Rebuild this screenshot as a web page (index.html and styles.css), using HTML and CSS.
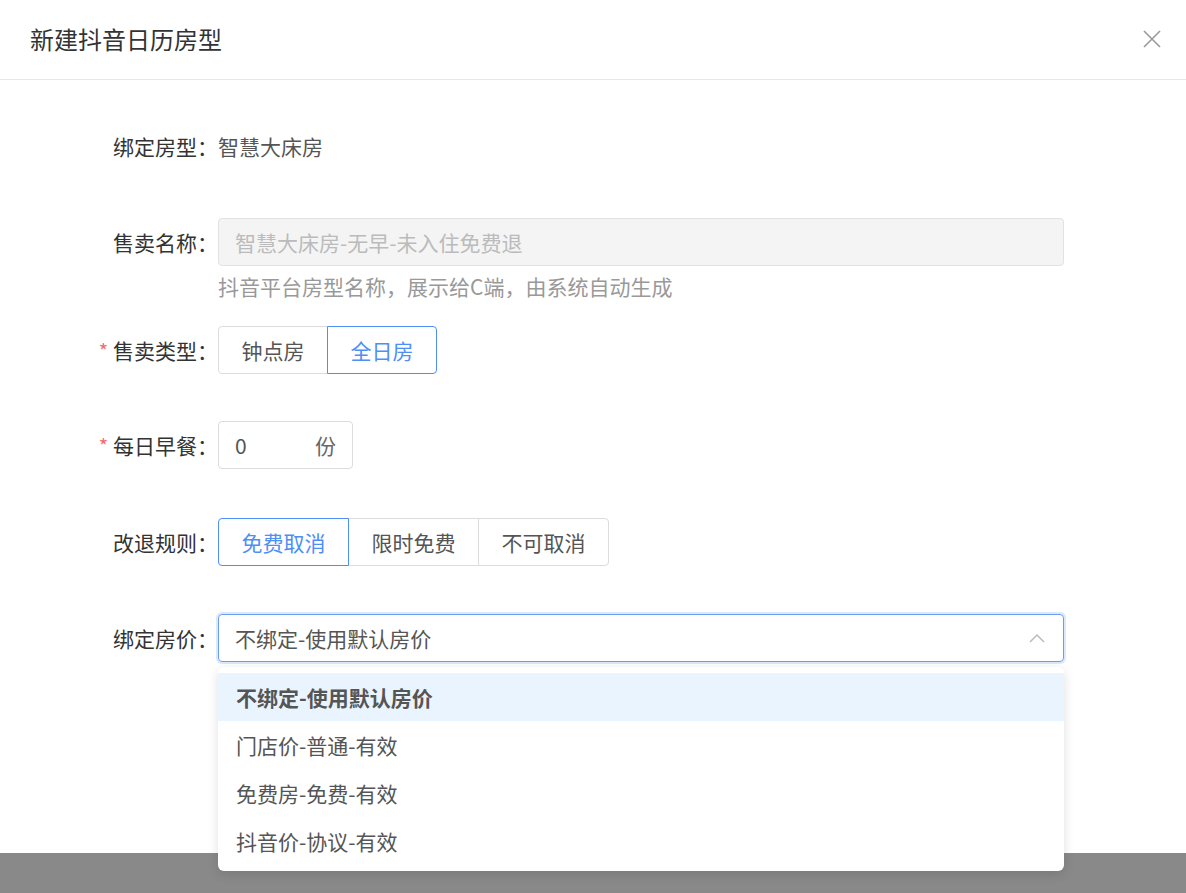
FILE: index.html
```html
<!DOCTYPE html>
<html>
<head>
    <meta charset="UTF-8">
    <title>新建抖音日历房型</title>
    <link rel="stylesheet" href="styles.css">
</head>
<body>
    <div class="dialog">
        <div class="dialog-header">
            <span class="dialog-title">新建抖音日历房型</span>
            <svg class="close" width="20" height="20" viewBox="0 0 20 20">
                <path d="M2 2 L18 18 M18 2 L2 18" stroke="#999" stroke-width="1.6" fill="none"/>
            </svg>
        </div>
        <div class="dialog-body">
            <div class="form-item">
                <label class="form-label">绑定房型：</label>
                <div class="form-content text-value">智慧大床房</div>
            </div>
            <div class="form-item tight">
                <label class="form-label">售卖名称：</label>
                <div class="form-content">
                    <div class="input disabled">智慧大床房-无早-未入住免费退</div>
                    <div class="help">抖音平台房型名称，展示给C端，由系统自动生成</div>
                </div>
            </div>
            <div class="form-item short">
                <label class="form-label required">售卖类型：</label>
                <div class="form-content">
                    <div class="radio-group">
                        <span class="radio-btn w109">钟点房</span>
                        <span class="radio-btn w109 active">全日房</span>
                    </div>
                </div>
            </div>
            <div class="form-item long">
                <label class="form-label required">每日早餐：</label>
                <div class="form-content">
                    <div class="input number-input">
                        <span>0</span>
                        <span class="suffix">份</span>
                    </div>
                </div>
            </div>
            <div class="form-item">
                <label class="form-label">改退规则：</label>
                <div class="form-content">
                    <div class="radio-group">
                        <span class="radio-btn w130 active">免费取消</span>
                        <span class="radio-btn w130">限时免费</span>
                        <span class="radio-btn w130">不可取消</span>
                    </div>
                </div>
            </div>
            <div class="form-item">
                <label class="form-label">绑定房价：</label>
                <div class="form-content select-wrap">
                    <div class="input select focused">
                        <span>不绑定-使用默认房价</span>
                        <svg class="arrow" width="16" height="10" viewBox="0 0 16 10">
                            <path d="M1 9 L8 2 L15 9" stroke="#bbb" stroke-width="1.5" fill="none"/>
                        </svg>
                    </div>
                    <ul class="dropdown">
                        <li class="selected">不绑定-使用默认房价</li>
                        <li>门店价-普通-有效</li>
                        <li>免费房-免费-有效</li>
                        <li>抖音价-协议-有效</li>
                    </ul>
                </div>
            </div>
        </div>
    </div>
    <div class="mask"></div>
</body>
</html>
```

FILE: styles.css
```css
body {
    margin: 0;
    font-family: "Noto Sans CJK SC", "Liberation Sans", sans-serif;
    background: #fff;
    color: #333;
}

.dialog {
    height: 853px;
    background: #fff;
}

.dialog-header {
    height: 79px;
    border-bottom: 1px solid #e8e8e8;
    display: flex;
    align-items: center;
    justify-content: space-between;
    padding: 0 24px 0 30px;
}

.dialog-title {
    font-size: 24px;
    color: #333;
    margin-top: -2px;
}

.close {
    margin-top: -2px;
}

.dialog-body {
    padding-top: 42px;
}

.form-item {
    display: flex;
    align-items: flex-start;
    margin-bottom: 48px;
    font-size: 21px;
}

.form-item.tight {
    margin-bottom: 28px;
}

.form-item.short {
    margin-bottom: 46px;
}

.form-item.long {
    margin-bottom: 48px;
}

.form-label {
    flex-shrink: 0;
    width: 218px;
    text-align: right;
    line-height: 48px;
    color: #333;
    box-sizing: border-box;
}

.form-label.required::before {
    content: "*";
    color: #f56c6c;
    margin-right: 5px;
    font-size: 20px;
}

.form-content {
    flex: 0 0 846px;
}

.text-value {
    line-height: 48px;
    color: #555;
}

.input {
    box-sizing: border-box;
    height: 48px;
    border: 1px solid #dcdcdc;
    border-radius: 4px;
    padding: 0 16px;
    display: flex;
    align-items: center;
    color: #555;
}

.input.disabled {
    background: #f4f4f4;
    border-color: #e2e2e2;
    color: #bbb;
}

.help {
    margin-top: 8px;
    line-height: 24px;
    color: #999;
}

.radio-group {
    display: flex;
}

.radio-btn {
    box-sizing: border-box;
    height: 48px;
    line-height: 46px;
    text-align: center;
    border: 1px solid #dcdcdc;
    color: #555;
    margin-left: -1px;
    background: #fff;
}

.radio-btn:first-child {
    margin-left: 0;
    border-radius: 4px 0 0 4px;
}

.radio-btn:last-child {
    border-radius: 0 4px 4px 0;
}

.radio-btn.active {
    border-color: #4d8ef7;
    color: #4d8ef7;
    position: relative;
}

.w109 {
    width: 110px;
}

.w130 {
    width: 131px;
}

.number-input {
    width: 135px;
    justify-content: space-between;
}

.suffix {
    color: #666;
}

.select-wrap {
    position: relative;
}

.select {
    justify-content: space-between;
}

.select.focused {
    border-color: #6a9ef0;
    box-shadow: 0 0 0 2px #dce8fb;
}

.arrow {
    margin-right: 2px;
}

.dropdown {
    position: absolute;
    top: 53px;
    left: 0;
    right: 0;
    margin: 0;
    padding: 6px 0;
    list-style: none;
    background: #fff;
    border-radius: 6px;
    box-shadow: 0 3px 12px rgba(0, 0, 0, 0.12);
    z-index: 2;
}

.dropdown li {
    height: 48px;
    line-height: 48px;
    padding: 0 18px;
    color: #555;
}

.dropdown li.selected {
    background: #e9f4fe;
    font-weight: bold;
}

.mask {
    height: 40px;
    background: #898989;
}
```
